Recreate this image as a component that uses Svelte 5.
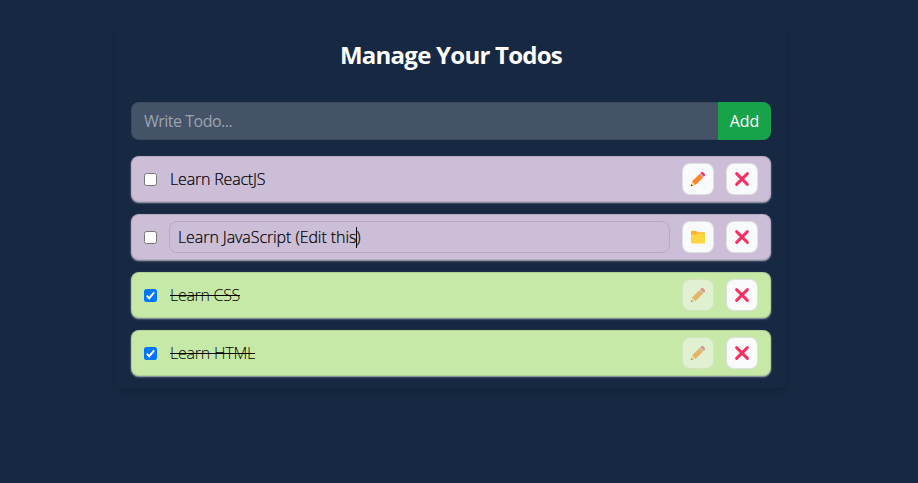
<script>
  let todos = $state([
    { id: 1, text: 'Learn ReactJS', done: false, editing: false, tracking: -0.18 },
    { id: 2, text: 'Learn JavaScript (Edit this)', done: false, editing: true, tracking: -0.08 },
    { id: 3, text: 'Learn CSS', done: true, editing: false, tracking: -0.3 },
    { id: 4, text: 'Learn HTML', done: true, editing: false, tracking: -0.22 }
  ]);
  let draft = $state('');

  function add(event) {
    event.preventDefault();
    if (!draft.trim()) return;
    todos.unshift({ id: Date.now(), text: draft, done: false, editing: false, tracking: -0.18 });
    draft = '';
  }
  function remove(id) {
    todos = todos.filter((t) => t.id !== id);
  }
</script>

<main>
  <section class="panel">
    <h1>Manage Your Todos</h1>
    <form onsubmit={add}>
      <input class="draft" placeholder="Write Todo..." bind:value={draft} />
      <button class="add" type="submit">Add</button>
    </form>
    <div class="list">
      {#each todos as todo (todo.id)}
        <div class="row" class:done={todo.done}>
          <button class="check" class:checked={todo.done} aria-label="Toggle" onclick={() => (todo.done = !todo.done)}>
            {#if todo.done}
              <svg viewBox="0 0 13 13"><path d="M2.8 6.8 5.2 9.2 10.2 3.3" fill="none" stroke="#fff" stroke-width="2" /></svg>
            {/if}
          </button>
          <div class="text" class:editing={todo.editing}>
            {#if todo.editing}
              <span style:letter-spacing="{todo.tracking}px">{todo.text.slice(0, -1)}<i class="caret"></i>{todo.text.slice(-1)}</span>
            {:else}
              <span style:letter-spacing="{todo.tracking}px">{todo.text}</span>
            {/if}
          </div>
          <button class="icon" disabled={todo.done} aria-label="Edit" onclick={() => (todo.editing = !todo.editing)}>
            {#if todo.editing}
              <svg viewBox="0 0 16 16">
                <path d="M1 2.5Q1 1.8 1.7 1.8H6l1.5 1.5h6.8q.7 0 .7.7v4H1z" fill="#ffb02e" />
                <path d="M1 5.6h5.2L7.8 4.5h6.5q.7 0 .7.7v8.6q0 .7-.7.7H1.7Q1 14.5 1 13.8z" fill="#fcd53f" />
              </svg>
            {:else}
              <svg viewBox="0 0 16 16">
                <path d="M2 10.5 9.6 2.9 13.1 6.4 5.5 14z" fill="#ff822d" />
                <path d="M2 10.5 5.5 14 1.5 15 1 14.5z" fill="#ffce7c" />
                <path d="M1.3 13.2 2.8 14.7 1.3 15.1Q.8 15.1.9 14.6z" fill="#402a32" />
                <path d="M9.3 3.2 10.5 2 14 5.5 12.8 6.7z" fill="#d3a7b4" />
                <path d="M10.5 2 11.3 1.2Q12.2.5 13.1 1.2L14.8 2.9Q15.5 3.8 14.8 4.7L14 5.5z" fill="#f92f60" />
              </svg>
            {/if}
          </button>
          <button class="icon" aria-label="Delete" onclick={() => remove(todo.id)}>
            <svg viewBox="0 0 16 16"><path d="M2.6 2.6 13.4 13.4M13.4 2.6 2.6 13.4" stroke="#f92f60" stroke-width="2.9" stroke-linecap="round" /></svg>
          </button>
        </div>
      {/each}
    </div>
  </section>
</main>

<style>
  :global(body) { margin: 0; background: #172842; }
  * { box-sizing: border-box; }
  main {
    min-height: 483px;
    padding-top: 27px;
    background: #172842;
    font: 16px/24px "Open Sans", "Noto Sans", sans-serif;
    color: #000;
  }
  .panel {
    width: 672px;
    margin-left: 115px;
    padding: 12px 16px;
    border-radius: 8px;
    box-shadow: 0 4px 6px -1px rgb(0 0 0 / 0.1), 0 2px 4px -2px rgb(0 0 0 / 0.1);
  }
  h1 {
    margin: 0 0 31px;
    text-align: center;
    color: #fff;
    font-size: 24px;
    line-height: 32px;
    font-weight: 700;
    letter-spacing: -0.75px;
  }
  button { padding: 0; font: inherit; }
  form { display: flex; height: 38px; margin-bottom: 16px; }
  .draft {
    flex: 1;
    min-width: 0;
    border: 1px solid rgb(0 0 0 / 0.1);
    border-right: 0;
    border-radius: 8px 0 0 8px;
    padding: 0 12px;
    background: #455368;
    color: #fff;
    font: inherit;
    letter-spacing: -0.5px;
    outline: none;
  }
  .draft::placeholder { color: #9ca3af; opacity: 1; }
  .add {
    width: 53px;
    border: 0;
    border-radius: 0 8px 8px 0;
    background: #16a34a;
    color: #fff;
  }
  .list { display: flex; flex-direction: column; gap: 12px; }
  .row {
    display: flex;
    align-items: center;
    height: 46px;
    padding: 6px 12px;
    border: 1px solid rgb(0 0 0 / 0.1);
    border-radius: 8px;
    background: #ccbed7;
    box-shadow: 0 1px 2px 0 rgb(255 255 255 / 0.5), 0 1px 1px 0 rgb(255 255 255 / 0.2);
  }
  .row.done { background: #c6e9a7; }
  .check {
    display: block;
    flex: none;
    width: 13px;
    height: 13px;
    border: 1px solid #767676;
    border-radius: 2.5px;
    background: #fff;
  }
  .check.checked { border: 0; background: #0075ff; }
  .check svg { display: block; width: 13px; height: 13px; }
  .text {
    flex: 1;
    display: flex;
    align-items: center;
    height: 32px;
    margin: 0 12px;
    border: 1px solid transparent;
    border-radius: 8px;
    font-weight: 300;
    -webkit-text-stroke: 0.2px #000;
    white-space: nowrap;
  }
  .text.editing { padding-left: 8px; border-color: rgb(0 0 0 / 0.1); }
  .done .text { text-decoration: line-through; -webkit-text-stroke-width: 0; }
  .caret {
    display: inline-block;
    width: 1px;
    height: 21px;
    margin-right: -1px;
    vertical-align: -5px;
    background: #000;
  }
  .icon {
    display: flex;
    flex: none;
    align-items: center;
    justify-content: center;
    width: 32px;
    height: 32px;
    border: 1px solid rgb(0 0 0 / 0.1);
    border-radius: 8px;
    background: #f9fafb;
  }
  .icon + .icon { margin-left: 12px; }
  .icon:disabled { opacity: 0.5; }
  .icon svg { width: 16px; height: 16px; }
</style>
